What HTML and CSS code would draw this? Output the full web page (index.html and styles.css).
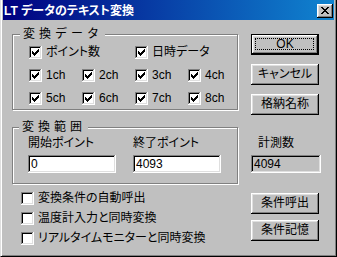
FILE: index.html
```html
<!DOCTYPE html>
<html lang="ja">
<head>
<meta charset="utf-8">
<link rel="stylesheet" href="styles.css">
</head>
<body>
<div class="window">
  <div class="titlebar">
    <span class="title">LT データのテキスト変換</span>
    <span class="close"><svg width="8" height="7" viewBox="0 0 8 7" shape-rendering="crispEdges"><path d="M0 0h2v1H0zM6 0h2v1H6zM1 1h2v1H1zM5 1h2v1H5zM2 2h4v1H2zM3 3h2v1H3zM2 4h4v1H2zM1 5h2v1H1zM5 5h2v1H5zM0 6h2v1H0zM6 6h2v1H6z" fill="#000"/></svg></span>
  </div>
  <div class="client">
    <div class="left">
      <fieldset class="group g1">
        <legend>変換データ</legend>
        <div class="grid">
          <label class="chk span2"><span class="cb"><svg width="7" height="7" viewBox="0 0 7 7" shape-rendering="crispEdges"><path d="M6 0h1v1H6zM5 1h2v1H5zM0 2h1v1H0zM4 2h3v1H4zM0 3h2v1H0zM3 3h3v1H3zM0 4h5v1H0zM1 5h3v1H1zM2 6h1v1H2z"/></svg></span>ポイント数</label>
          <label class="chk span2"><span class="cb"><svg width="7" height="7" viewBox="0 0 7 7" shape-rendering="crispEdges"><path d="M6 0h1v1H6zM5 1h2v1H5zM0 2h1v1H0zM4 2h3v1H4zM0 3h2v1H0zM3 3h3v1H3zM0 4h5v1H0zM1 5h3v1H1zM2 6h1v1H2z"/></svg></span>日時データ</label>
          <label class="chk"><span class="cb"><svg width="7" height="7" viewBox="0 0 7 7" shape-rendering="crispEdges"><path d="M6 0h1v1H6zM5 1h2v1H5zM0 2h1v1H0zM4 2h3v1H4zM0 3h2v1H0zM3 3h3v1H3zM0 4h5v1H0zM1 5h3v1H1zM2 6h1v1H2z"/></svg></span>1ch</label>
          <label class="chk"><span class="cb"><svg width="7" height="7" viewBox="0 0 7 7" shape-rendering="crispEdges"><path d="M6 0h1v1H6zM5 1h2v1H5zM0 2h1v1H0zM4 2h3v1H4zM0 3h2v1H0zM3 3h3v1H3zM0 4h5v1H0zM1 5h3v1H1zM2 6h1v1H2z"/></svg></span>2ch</label>
          <label class="chk"><span class="cb"><svg width="7" height="7" viewBox="0 0 7 7" shape-rendering="crispEdges"><path d="M6 0h1v1H6zM5 1h2v1H5zM0 2h1v1H0zM4 2h3v1H4zM0 3h2v1H0zM3 3h3v1H3zM0 4h5v1H0zM1 5h3v1H1zM2 6h1v1H2z"/></svg></span>3ch</label>
          <label class="chk"><span class="cb"><svg width="7" height="7" viewBox="0 0 7 7" shape-rendering="crispEdges"><path d="M6 0h1v1H6zM5 1h2v1H5zM0 2h1v1H0zM4 2h3v1H4zM0 3h2v1H0zM3 3h3v1H3zM0 4h5v1H0zM1 5h3v1H1zM2 6h1v1H2z"/></svg></span>4ch</label>
          <label class="chk"><span class="cb"><svg width="7" height="7" viewBox="0 0 7 7" shape-rendering="crispEdges"><path d="M6 0h1v1H6zM5 1h2v1H5zM0 2h1v1H0zM4 2h3v1H4zM0 3h2v1H0zM3 3h3v1H3zM0 4h5v1H0zM1 5h3v1H1zM2 6h1v1H2z"/></svg></span>5ch</label>
          <label class="chk"><span class="cb"><svg width="7" height="7" viewBox="0 0 7 7" shape-rendering="crispEdges"><path d="M6 0h1v1H6zM5 1h2v1H5zM0 2h1v1H0zM4 2h3v1H4zM0 3h2v1H0zM3 3h3v1H3zM0 4h5v1H0zM1 5h3v1H1zM2 6h1v1H2z"/></svg></span>6ch</label>
          <label class="chk"><span class="cb"><svg width="7" height="7" viewBox="0 0 7 7" shape-rendering="crispEdges"><path d="M6 0h1v1H6zM5 1h2v1H5zM0 2h1v1H0zM4 2h3v1H4zM0 3h2v1H0zM3 3h3v1H3zM0 4h5v1H0zM1 5h3v1H1zM2 6h1v1H2z"/></svg></span>7ch</label>
          <label class="chk"><span class="cb"><svg width="7" height="7" viewBox="0 0 7 7" shape-rendering="crispEdges"><path d="M6 0h1v1H6zM5 1h2v1H5zM0 2h1v1H0zM4 2h3v1H4zM0 3h2v1H0zM3 3h3v1H3zM0 4h5v1H0zM1 5h3v1H1zM2 6h1v1H2z"/></svg></span>8ch</label>
        </div>
      </fieldset>
      <fieldset class="group g2">
        <legend>変換範囲</legend>
        <div class="fields">
          <div class="field">
            <div class="lbl">開始ポイント</div>
            <div class="input">0</div>
          </div>
          <div class="field">
            <div class="lbl">終了ポイント</div>
            <div class="input">4093</div>
          </div>
        </div>
      </fieldset>
      <div class="options">
        <label class="chk"><span class="cb"></span>変換条件の自動呼出</label>
        <label class="chk"><span class="cb"></span>温度計入力と同時変換</label>
        <label class="chk"><span class="cb"></span>リアルタイムモニターと同時変換</label>
      </div>
    </div>
    <div class="right">
      <div class="btn default">OK</div>
      <div class="btn b2">キャンセル</div>
      <div class="btn b2">格納名称</div>
      <div class="lbl count-lbl">計測数</div>
      <div class="input readonly">4094</div>
      <div class="btn b3">条件呼出</div>
      <div class="btn b4">条件記憶</div>
    </div>
  </div>
</div>
</body>
</html>
```

FILE: styles.css
```css
* { box-sizing: border-box; }
html, body { margin: 0; padding: 0; background: #c0c0c0; }
body {
  font-family: "Liberation Sans", "Noto Sans CJK JP", sans-serif;
  font-size: 12px;
  line-height: 14px;
  color: #000;
  font-feature-settings: "palt";
}
.window {
  width: 337px;
  height: 257px;
  background: #c0c0c0;
  border-left: 1px solid #dfdfdf;
  border-right: 1px solid #000;
  border-bottom: 1px solid #000;
  box-shadow: inset 1px 0 #fff, inset -1px -1px #808080;
  padding: 0 2px 2px 2px;
  display: flex;
  flex-direction: column;
}
.titlebar {
  height: 20px;
  flex: none;
  background: linear-gradient(90deg, #000080, #1084d0);
  display: flex;
  justify-content: space-between;
  align-items: flex-start;
  padding: 0 1px 0 1px;
}
.title {
  color: #fff;
  font-weight: bold;
  line-height: 20px;
  padding-top: 1px;
}
.close {
  margin-top: 4px;
  width: 16px;
  height: 14px;
  background: #c0c0c0;
  box-shadow: inset -1px -1px #000, inset 1px 1px #fff, inset -2px -2px #808080, inset 2px 2px #dfdfdf;
  display: flex;
  align-items: center;
  justify-content: center;
  padding: 0 1px 1px 0;
}
.close svg { display: block; }
.client {
  flex: 1;
  display: flex;
  padding-left: 9px;
}
.left {
  width: 226px;
  display: flex;
  flex-direction: column;
}
.group {
  margin: 0;
  border: 1px solid #808080;
  box-shadow: inset 1px 1px #fff, 1px 1px #fff;
  min-inline-size: 0;
}
.group legend {
  padding: 0 2px 0 3px;
  margin-left: -9px;
  line-height: 14px;
  letter-spacing: 4px;
  font-feature-settings: normal;
  background: #c0c0c0;
}
.g1 {
  margin-top: 7px;
  padding: 5px 0 4px 16px;
}
.grid {
  display: grid;
  grid-template-columns: repeat(4, 53px);
  grid-auto-rows: 13px;
  row-gap: 10px;
}
.span2 { grid-column: span 2; }
.chk {
  display: flex;
  align-items: center;
  gap: 4px;
  height: 13px;
  line-height: 13px;
  white-space: nowrap;
}
.cb {
  width: 13px;
  height: 13px;
  flex: none;
  background: #fff;
  box-shadow: inset -1px -1px #fff, inset 1px 1px #808080, inset -2px -2px #dfdfdf, inset 2px 2px #000;
  display: flex;
  align-items: center;
  justify-content: center;
}
.cb svg { display: block; }
.g2 {
  margin-top: 10px;
  padding: 2px 0 10px 15px;
}
.fields {
  display: flex;
  gap: 17px;
}
.field {
  display: flex;
  flex-direction: column;
  gap: 5px;
}
.lbl { line-height: 14px; }
.input {
  width: 88px;
  height: 18px;
  background: #fff;
  box-shadow: inset -1px -1px #fff, inset 1px 1px #808080, inset -2px -2px #dfdfdf, inset 2px 2px #000;
  padding: 2px 0 0 3px;
  line-height: 14px;
}
.options {
  margin-top: 8px;
  padding-left: 9px;
  display: flex;
  flex-direction: column;
  gap: 7px;
}
.right {
  margin-left: 13px;
  width: 70px;
  display: flex;
  flex-direction: column;
  align-items: flex-start;
}
.btn {
  position: relative;
  width: 68px;
  height: 21px;
  display: flex;
  align-items: center;
  justify-content: center;
  background: #c0c0c0;
  box-shadow: inset -1px -1px #000, inset 1px 1px #fff, inset -2px -2px #808080, inset 2px 2px #dfdfdf;
  padding-bottom: 1px;
}
.btn.default {
  margin-top: 14px;
  border: 1px solid #000;
}
.btn.default::after {
  content: "";
  position: absolute;
  inset: 3px 4px 4px 3px;
  border: 1px dotted #000;
}
.b2 { margin-top: 9px; }
.count-lbl {
  margin-top: 21px;
  padding-left: 7px;
}
.input.readonly {
  width: 70px;
  margin-top: 5px;
  background: #c0c0c0;
}
.b3 { margin-top: 20px; }
.b4 { margin-top: 6px; }
```
